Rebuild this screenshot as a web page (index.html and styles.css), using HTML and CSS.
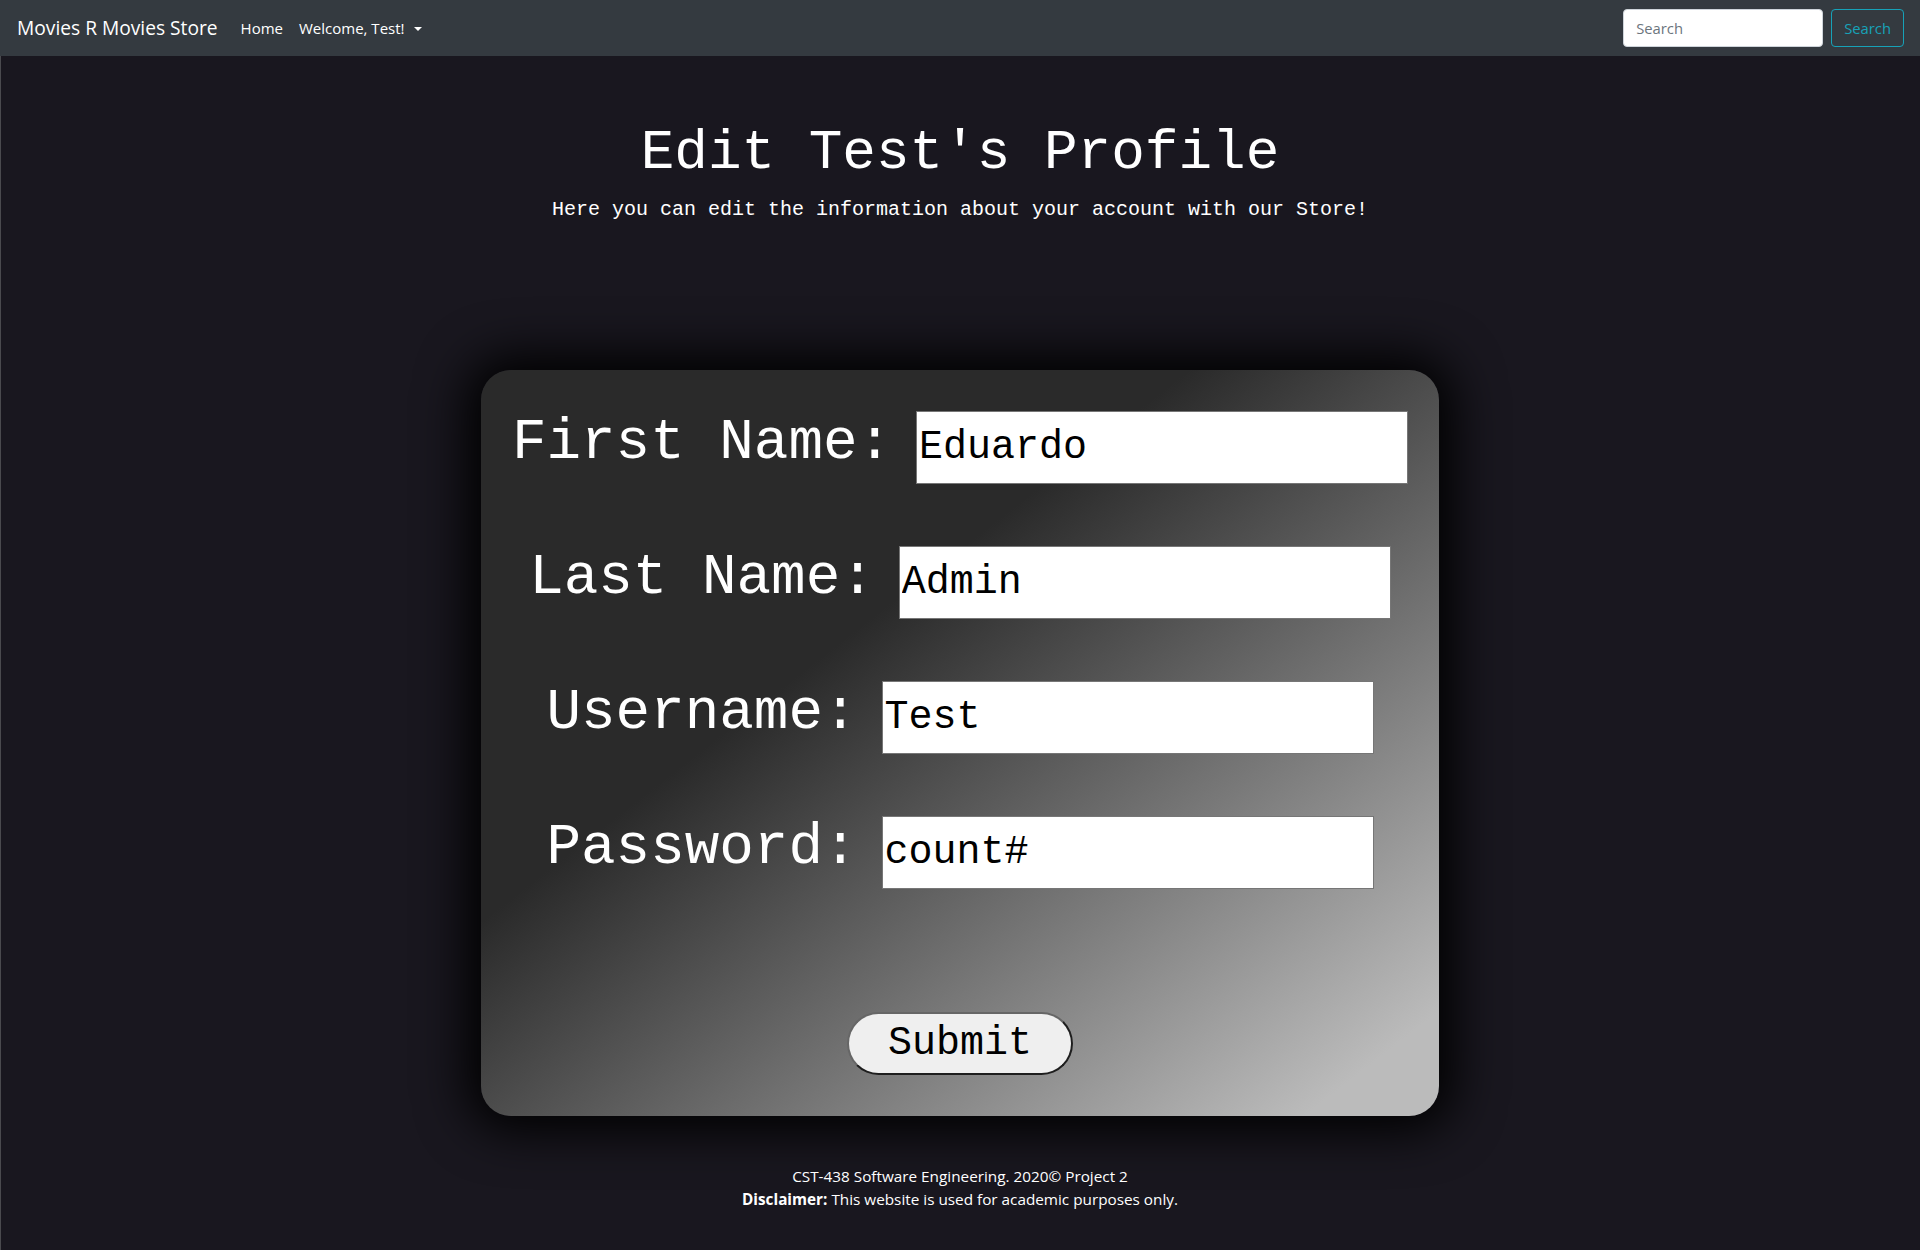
FILE: index.html
```html
<!DOCTYPE html>
<html lang="en">
<head>
<meta charset="utf-8">
<title>Edit Test's Profile</title>
<link rel="stylesheet" href="styles.css">
</head>
<body>
<nav class="navbar">
  <a class="brand" href="#">Movies R Movies Store</a>
  <ul class="nav">
    <li><a class="nav-link" href="#">Home</a></li>
    <li><a class="nav-link" href="#">Welcome, Test!<span class="caret"></span></a></li>
  </ul>
  <form class="search">
    <input class="search-input" type="search" placeholder="Search">
    <button class="search-btn" type="button">Search</button>
  </form>
</nav>
<main class="page">
  <header class="hero">
    <h1 class="title">Edit Test's Profile</h1>
    <p class="lead">Here you can edit the information about your account with our Store!</p>
  </header>
  <form class="card">
    <div class="row"><label class="label">First Name:</label> <input class="field" type="text" value="Eduardo"></div>
    <div class="row"><label class="label">Last Name:</label> <input class="field" type="text" value="Admin"></div>
    <div class="row"><label class="label">Username:</label> <input class="field" type="text" value="Test"></div>
    <div class="row"><label class="label">Password:</label> <input class="field" type="text" value="count#"></div>
    <div class="actions"><button class="submit" type="button">Submit</button></div>
  </form>
</main>
<footer class="footer">
  <div>CST-438 Software Engineering. 2020© Project 2</div>
  <div><b>Disclaimer:</b> This website is used for academic purposes only.</div>
</footer>
</body>
</html>
```

FILE: styles.css
```css
* { box-sizing: border-box; }
html, body { margin: 0; }
body {
  background: #19171f;
  color: #fff;
  font-family: "Open Sans", sans-serif;
  font-size: 15px;
  line-height: 1.5;
  min-height: 1250px;
  box-shadow: inset 1px 0 0 #4a4a4e;
}
.navbar {
  display: flex;
  align-items: center;
  height: 56px;
  padding: 0 16px 0 17px;
  background: #343a40;
}
.brand {
  font-size: 19.2px;
  line-height: 30px;
  color: #fff;
  text-decoration: none;
  margin-right: 15px;
}
.nav {
  display: flex;
  list-style: none;
  margin: 0;
  padding: 0;
}
.nav-link {
  display: block;
  padding: 8px;
  color: #fff;
  text-decoration: none;
  font-size: 15px;
}
.caret {
  display: inline-block;
  margin-left: 9px;
  vertical-align: 3px;
  border-top: 4.8px solid #fff;
  border-left: 4.8px solid transparent;
  border-right: 4.8px solid transparent;
}
.search {
  margin-left: auto;
  display: flex;
  gap: 8px;
}
.search-input {
  width: 200px;
  height: 38px;
  padding: 6px 12px;
  border: 1px solid #ced4da;
  border-radius: 4px;
  font: 14.8px "Open Sans", sans-serif;
  color: #495057;
  background: #fff;
}
.search-input::placeholder { color: #6c757d; }
.search-btn {
  height: 38px;
  padding: 6px 12px;
  border: 1px solid #17a2b8;
  border-radius: 4px;
  background: transparent;
  color: #17a2b8;
  font: 14.8px "Open Sans", sans-serif;
}
.hero {
  padding-top: 64px;
  text-align: center;
  font-family: "Liberation Mono", monospace;
}
.title {
  margin: 0 0 8px;
  font-size: 56px;
  font-weight: 400;
  line-height: 1.2;
}
.lead {
  margin: 0;
  font-size: 20px;
  line-height: 1.5;
}
.card {
  width: 958px;
  margin: 145px auto 0;
  padding: 30px 0 41px;
  border-radius: 30px;
  background: linear-gradient(to bottom right, #2a2a2a 37%, #bbbbbb 93%);
  box-shadow: 0 0 50px 14px #000;
  font-family: "Liberation Mono", monospace;
}
.row {
  text-align: center;
  font-size: 40px;
  line-height: 1.5;
}
.row + .row { margin-top: 48.6px; }
.label {
  font-size: 57.6px;
  color: #fff;
}
.field {
  width: 492px;
  height: 73px;
  padding: 1px 2px;
  border: 1px solid #767676;
  background: #fff;
  color: #000;
  font: 40px "Liberation Mono", monospace;
  vertical-align: baseline;
}
.actions {
  display: flex;
  justify-content: center;
  margin-top: 120px;
}
.submit {
  width: 226px;
  height: 63px;
  padding: 0;
  border: 2px solid;
  border-color: #666 #1e1e1e #1e1e1e #666;
  border-radius: 32px;
  background: #efefef;
  color: #000;
  font: 40px "Liberation Mono", monospace;
}
.footer {
  margin-top: 49.6px;
  text-align: center;
  font-size: 15.3px;
  line-height: 22.5px;
}
.footer b { font-weight: 700; }
```
